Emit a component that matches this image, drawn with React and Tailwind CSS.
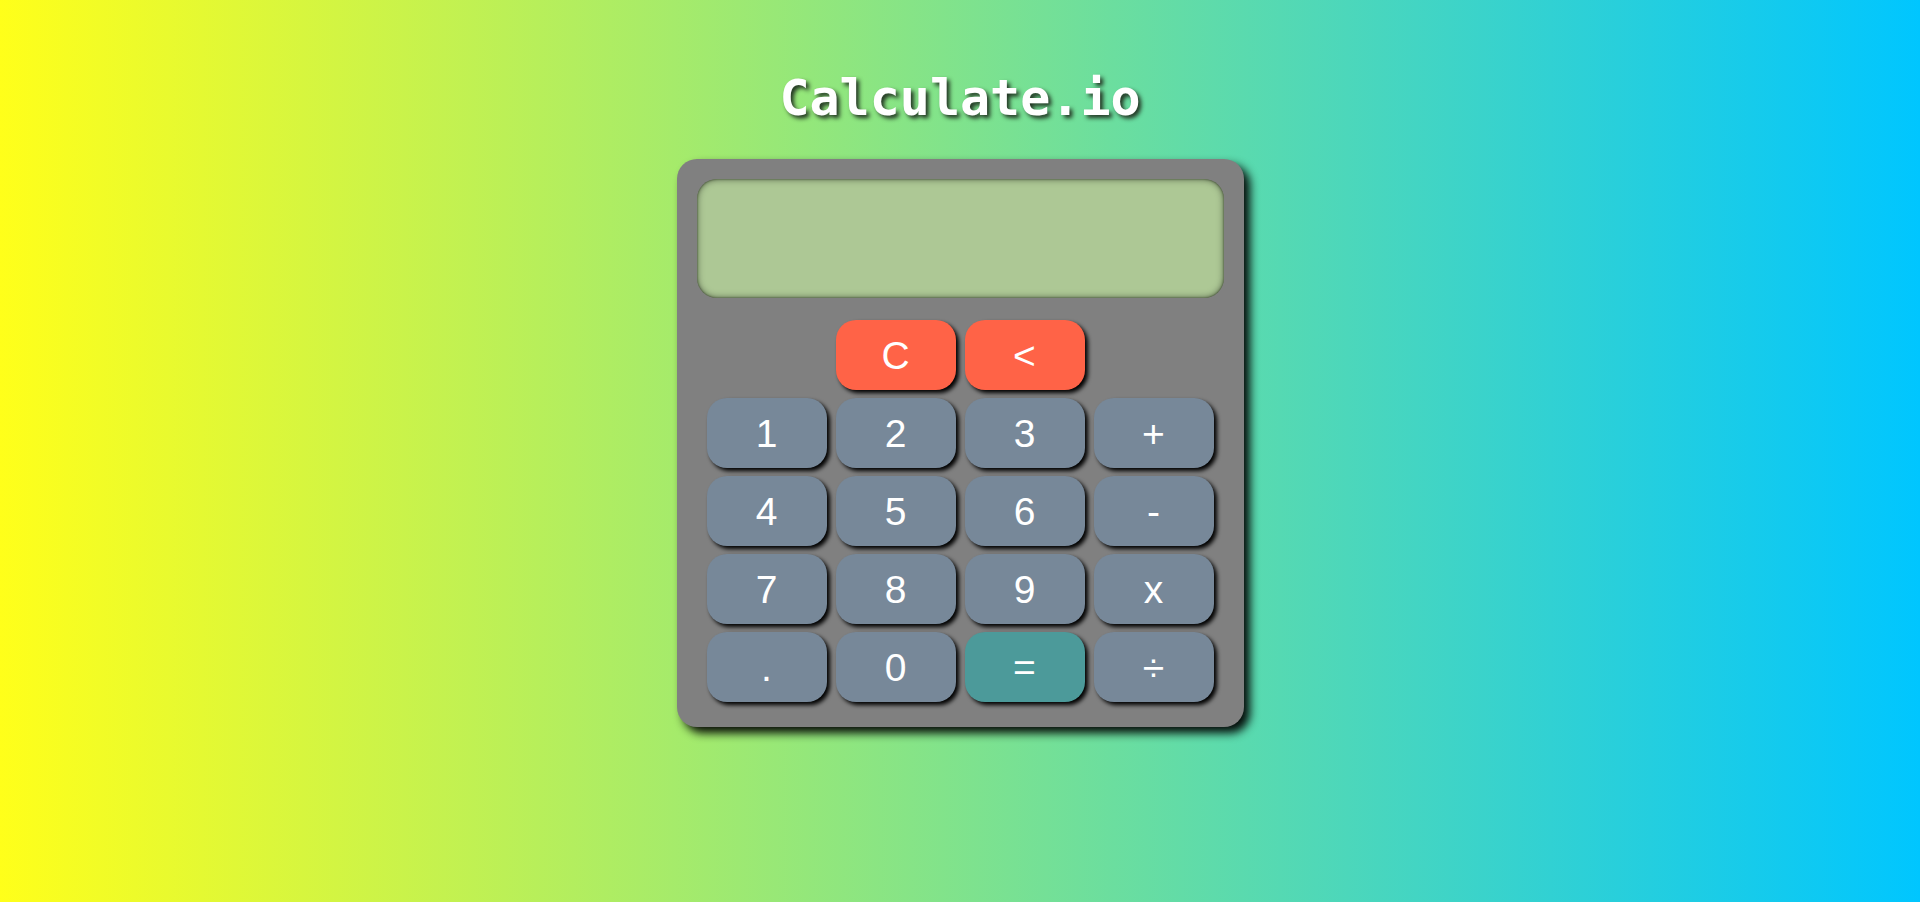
import { useState } from 'react'

const rows = [
  ['1', '2', '3', '+'],
  ['4', '5', '6', '-'],
  ['7', '8', '9', 'x'],
  ['.', '0', '=', '÷'],
]

function Key({ label, className = "bg-[#778899]", onClick }) {
  return (
    <button
      className={`h-[70px] w-[120px] rounded-[20px] text-[39px] leading-none text-white font-['Liberation_Sans',Arial,sans-serif] shadow-[3px_3px_4px_#000] ${className}`}
      onClick={() => onClick(label)}
    >
      {label}
    </button>
  )
}

export default function App() {
  const [display, setDisplay] = useState("")

  const press = (k) => {
    if (k === 'C') return setDisplay("")
    if (k === '<') return setDisplay(display.slice(0, -1))
    if (k === '=') {
      try {
        const expr = display.replace(/x/g, '*').replace(/÷/g, '/')
        setDisplay(String(Function(`return (${expr})`)()))
      } catch {
        setDisplay("Error")
      }
      return
    }
    setDisplay(display + k)
  }

  return (
    <main className="flex min-h-screen flex-col items-center bg-[linear-gradient(to_right,#ffff1a,#00c6ff)]">
      <h1 className="mt-[66px] text-[50px] leading-[64px] font-bold text-white font-['DejaVu_Sans_Mono',monospace] [text-shadow:3px_3px_4px_#223322]">
        Calculate.io
      </h1>
      <div className="mt-[29px] w-[567px] rounded-[20px] bg-[#808080] px-[20px] pt-[20px] pb-[25px] shadow-[6px_6px_10px_rgba(0,0,0,0.95)]">
        <div className="flex h-[119px] items-center justify-end rounded-[20px] bg-[#adc895] px-5 text-[48px] text-[#2b3a22] font-['DejaVu_Sans_Mono',monospace] shadow-[inset_0_0_2px_rgba(40,50,30,0.9),inset_0_0_7px_rgba(0,0,0,0.55)]">
          {display}
        </div>
        <div className="mt-[22px] grid grid-cols-[repeat(4,120px)] justify-center gap-x-[9px] gap-y-[8px]">
          <div />
          <Key label="C" className="bg-[#ff6347]" onClick={press} />
          <Key label="<" className="bg-[#ff6347]" onClick={press} />
          <div />
          {rows.flat().map((k) => (
            <Key
              key={k}
              label={k}
              className={k === '=' ? "bg-[#4c9a9a]" : "bg-[#778899]"}
              onClick={press}
            />
          ))}
        </div>
      </div>
    </main>
  )
}
